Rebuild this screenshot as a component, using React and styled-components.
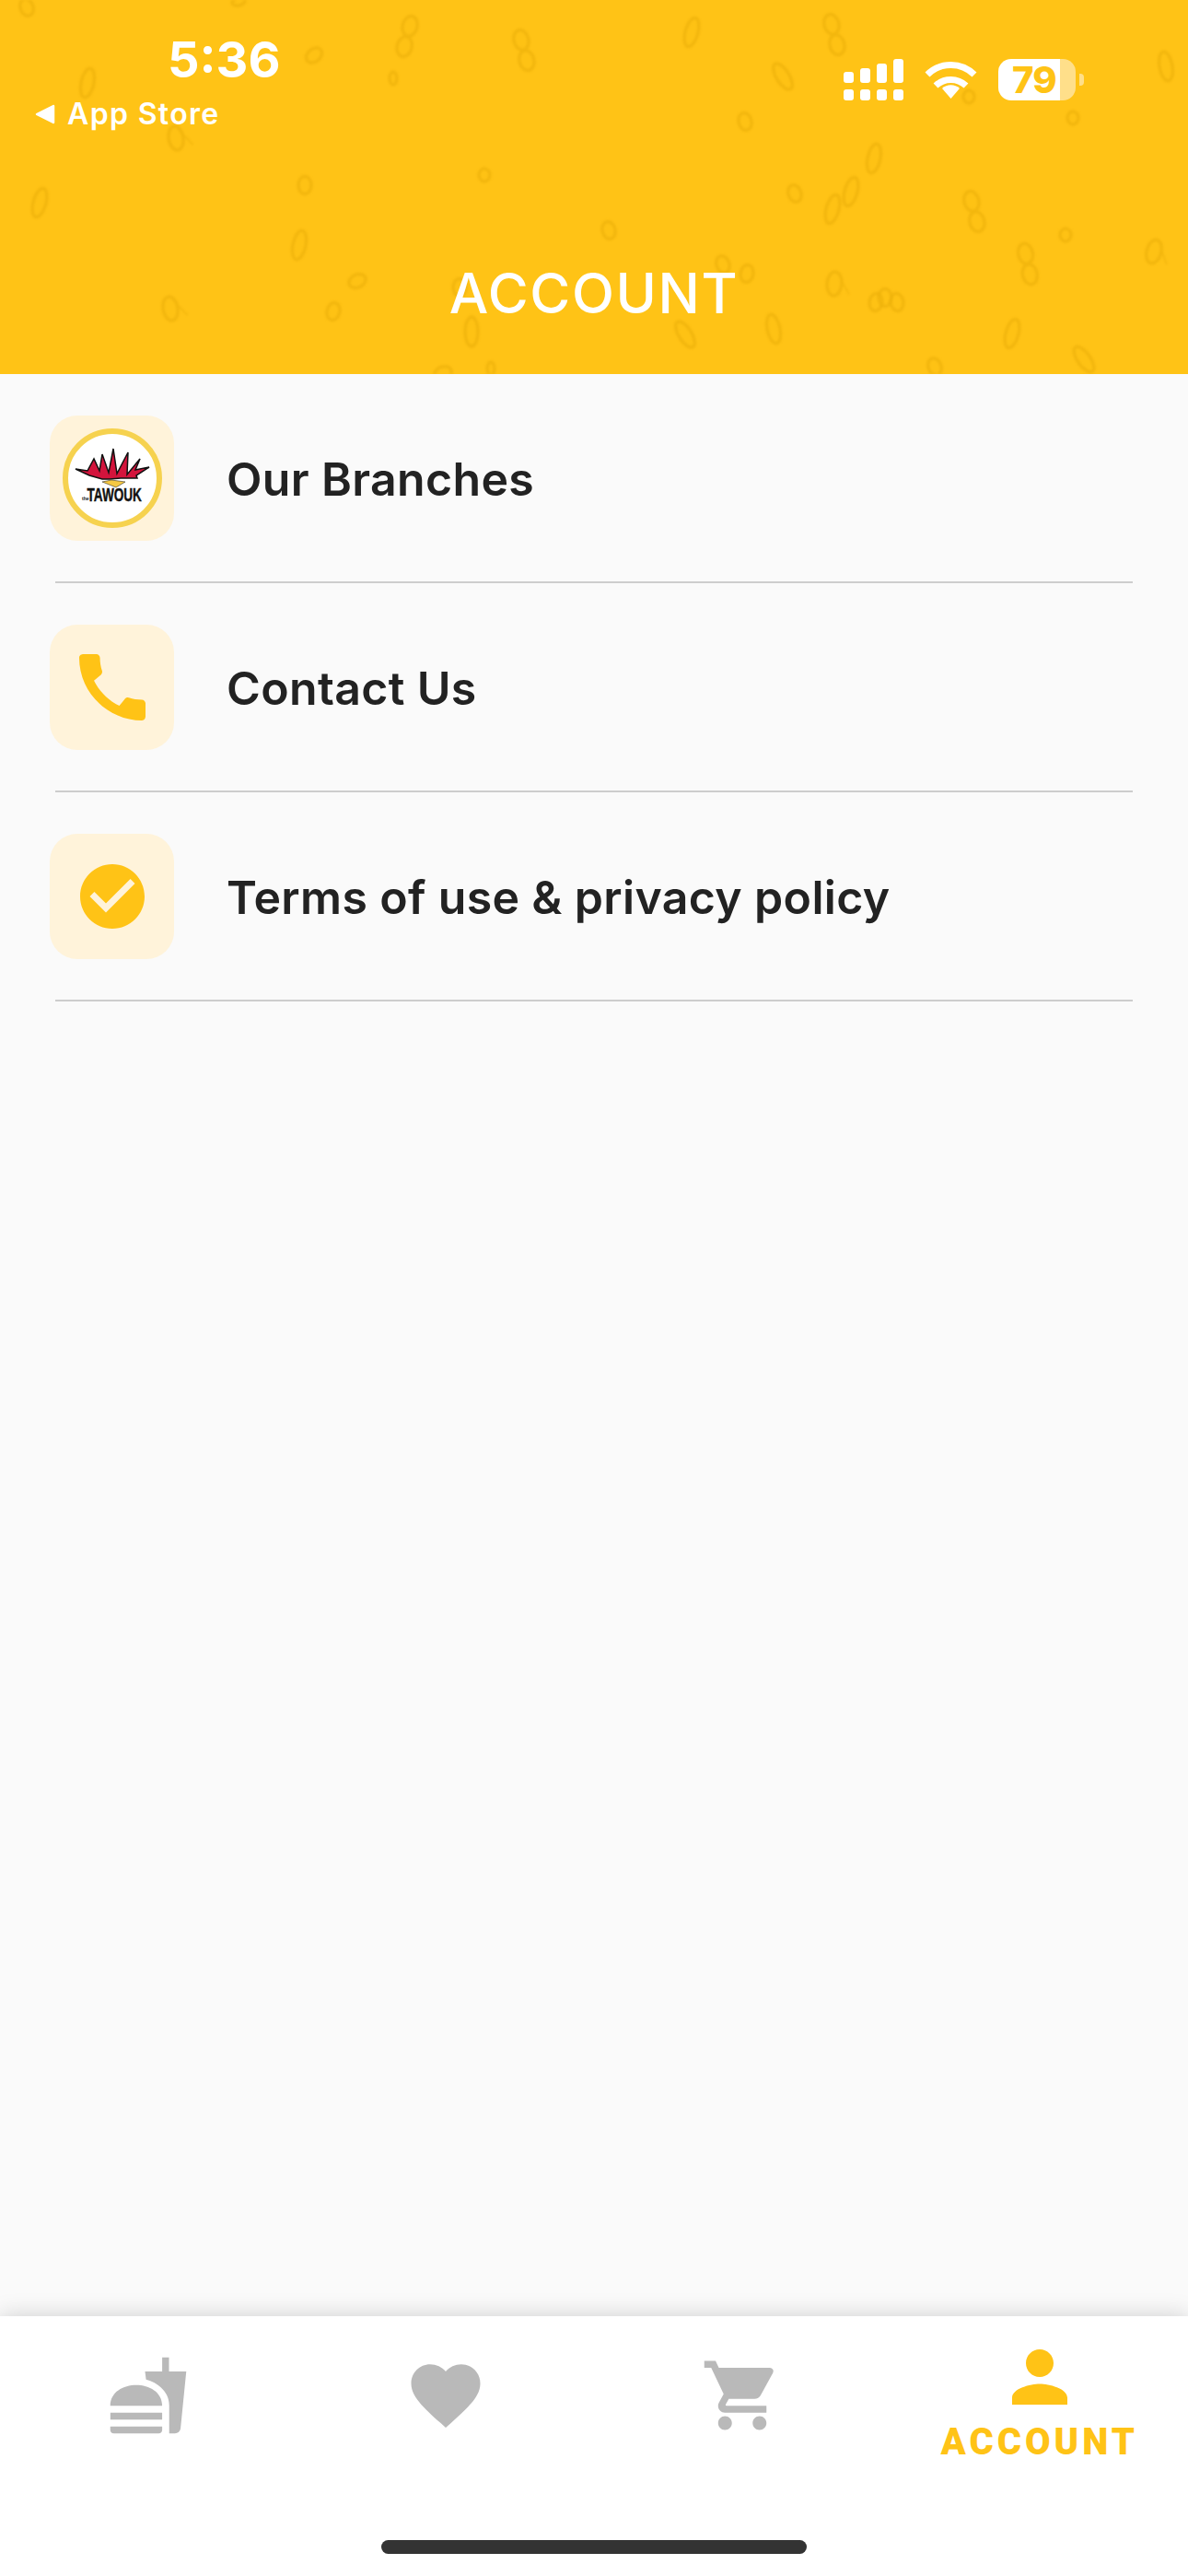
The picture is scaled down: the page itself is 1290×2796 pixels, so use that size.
import React from "react";
import styled, { createGlobalStyle } from "styled-components";
import { MdCall, MdCheckCircle, MdFastfood, MdFavorite, MdShoppingCart, MdPerson } from "react-icons/md";

const Global = createGlobalStyle`
  html, body { margin: 0; padding: 0; background: #fafafa; }
  * { box-sizing: border-box; }
`;

const YELLOW = "#ffc316";

const Page = styled.div`
  width: 1290px;
  height: 2796px;
  display: flex;
  flex-direction: column;
  overflow: hidden;
  background: #fafafa;
  font-family: Inter, "Liberation Sans", sans-serif;
`;

const Header = styled.header`
  position: relative;
  height: 406px;
  flex: none;
  background: ${YELLOW};
  color: #fff;
  display: flex;
  flex-direction: column;
  overflow: hidden;
`;

const Texture = styled.svg`
  position: absolute;
  inset: 0;
  filter: blur(1px);
`;

const StatusBar = styled.div`
  position: relative;
  display: flex;
  justify-content: space-between;
  padding: 36px 113px 0 38px;
  height: 282px;
`;

const StatusLeft = styled.div`
  display: flex;
  flex-direction: column;
`;

const Time = styled.div`
  font-size: 54px;
  line-height: 58px;
  font-weight: 700;
  margin-left: 144px;
`;

const BackLink = styled.div`
  display: flex;
  align-items: center;
  gap: 13px;
  margin-top: 10px;
  font-size: 32px;
  line-height: 40px;
  font-weight: 600;
  letter-spacing: 1.35px;
`;

const StatusRight = styled.div`
  display: flex;
  align-items: flex-start;
  gap: 23px;
  padding-top: 28px;
`;

const BatteryWrap = styled.div`
  display: flex;
  align-items: center;
  gap: 4px;
`;

const BatteryBody = styled.div`
  width: 84px;
  height: 45px;
  border-radius: 14px;
  background: linear-gradient(to right, #fff 0, #fff 67px, #ffdf8a 67px);
  color: ${YELLOW};
  font-size: 40px;
  line-height: 45px;
  font-weight: 800;
  padding-left: 15px;
  letter-spacing: -1px;
`;

const BatteryCap = styled.div`
  width: 5px;
  height: 13px;
  border-radius: 0 4px 4px 0;
  background: #ffdf8a;
`;

const Title = styled.h1`
  position: relative;
  margin: 0;
  text-align: center;
  font-size: 60px;
  line-height: 72px;
  font-weight: 500;
  letter-spacing: 1.6px;
`;

const Main = styled.main`
  flex: 1;
  display: flex;
  flex-direction: column;
`;

const Row = styled.div`
  height: 227px;
  padding: 45px 60px 0 54px;
  display: flex;
  flex-direction: column;
`;

const RowBody = styled.div`
  display: flex;
  align-items: center;
  gap: 57px;
  height: 136px;
`;

const IconBox = styled.div`
  width: 135px;
  height: 136px;
  border-radius: 30px;
  background: #fff3da;
  color: ${YELLOW};
  display: flex;
  align-items: center;
  justify-content: center;
`;

const RowLabel = styled.div`
  padding-top: 1px;
  font-size: 50px;
  line-height: 60px;
  font-weight: 600;
  color: #222;
  letter-spacing: 0.35px;
  white-space: nowrap;
`;

const Divider = styled.div`
  height: 2px;
  margin: 44px 0 0 6px;
  background: #cdcdcd;
`;

const TabBar = styled.nav`
  flex: none;
  height: 282px;
  background: #fff;
  box-shadow: 0 0 24px rgba(0, 0, 0, 0.18);
  display: flex;
  flex-direction: column;
  position: relative;
`;

const Tabs = styled.div`
  flex: 1;
  display: grid;
  grid-template-columns: repeat(4, 1fr);
`;

const Tab = styled.div`
  display: flex;
  flex-direction: column;
  align-items: center;
  padding-top: ${(p) => (p.$active ? "21px" : "41px")};
  color: ${(p) => (p.$active ? YELLOW : "#b9b9b9")};
`;

const TabLabel = styled.div`
  margin-top: 4px;
  font-family: Roboto, "Liberation Sans", sans-serif;
  font-size: 40px;
  line-height: 44px;
  font-weight: 900;
  letter-spacing: 4px;
  white-space: nowrap;
`;

const HomeIndicator = styled.div`
  width: 462px;
  height: 15px;
  border-radius: 8px;
  background: #333;
  margin: 0 auto 24px;
`;

const blobs = [
  [29, 8, "s", -20], [442, 40, "d", 15], [341, 60, "s", 50], [569, 55, "d", -15], [427, 85, "t", 0],
  [95, 90, "l", 12], [191, 150, "d2", -10], [331, 201, "s", 0], [526, 190, "c", 0], [43, 220, "l", 15],
  [325, 266, "l", 12], [388, 305, "s", 65], [185, 335, "d2", -10], [362, 338, "s", 15], [499, 312, "s", 0],
  [512, 360, "l", 0], [481, 405, "s", 70], [533, 400, "t", 0], [259, 2, "t", 80],
  [751, 35, "l", 15], [906, 38, "d", -15], [850, 83, "l", -32], [809, 132, "s", -15], [1165, 128, "c", 0],
  [949, 172, "l", 12], [863, 210, "s", -20], [924, 208, "l", 15], [904, 227, "l", 15], [1058, 230, "d", -15],
  [1266, 72, "l", -10], [1052, 105, "c", 0], [661, 250, "s", -15], [1157, 255, "c", 0], [785, 287, "s", -20],
  [811, 297, "s", 10], [906, 308, "d2", 5], [1116, 287, "d", -12], [1253, 273, "d2", 15], [951, 328, "s", 8],
  [961, 323, "s", 0], [974, 328, "s", -8], [744, 363, "l", -32], [840, 357, "l", -12], [1099, 362, "l", 15],
  [1177, 390, "l", -35], [1015, 398, "s", -20],
];

const Blob = ({ x, y, kind, rot }) => (
  <g
    transform={`translate(${x} ${y}) rotate(${rot})`}
    fill="#f4b80f"
    fillOpacity="0.2"
    stroke="#eeb20c"
    strokeWidth="3.5"
    opacity="0.7"
  >
    {kind === "l" && <ellipse rx="7" ry="16" />}
    {kind === "s" && <ellipse rx="7" ry="9.5" />}
    {kind === "t" && <ellipse rx="4" ry="7" />}
    {kind === "c" && <ellipse rx="6" ry="7" />}
    {kind === "d" && (
      <>
        <ellipse cy="-12" rx="8" ry="11" />
        <ellipse cy="11" rx="8" ry="11" />
      </>
    )}
    {kind === "d2" && (
      <>
        <ellipse rx="8" ry="13" />
        <path d="M6 -6 L17 10" strokeWidth="1.5" />
      </>
    )}
  </g>
);

const Triangle = () => (
  <svg width="22" height="22" viewBox="0 0 22 22">
    <path d="M20 2 L2 11 L20 20 Z" fill="#fff" stroke="#fff" strokeWidth="2.5" strokeLinejoin="round" />
  </svg>
);

const Signal = () => (
  <svg width="65" height="45" viewBox="0 0 65 45" fill="#fff">
    {[
      [0, 14],
      [18, 10],
      [36, 5],
      [54, 0],
    ].map(([x, top]) => (
      <g key={x}>
        <rect x={x} y={top} width="11" height={26 - top} rx="3" />
        <rect x={x} y="33" width="11" height="12" rx="3" />
      </g>
    ))}
  </svg>
);

const Wifi = () => (
  <svg width="57" height="41" viewBox="0 0 57 41" style={{ marginTop: 2 }}>
    <path d="M3 15 A36 36 0 0 1 54 15" fill="none" stroke="#fff" strokeWidth="7" />
    <path d="M12 27 A24 24 0 0 1 45 27" fill="none" stroke="#fff" strokeWidth="7" />
    <path d="M28.5 41 L19 30 A14 14 0 0 1 38 30 Z" fill="#fff" />
  </svg>
);

const Logo = () => (
  <svg width="108" height="108" viewBox="0 0 108 108">
    <circle cx="54" cy="54" r="51" fill="#fff" stroke="#f6d24f" strokeWidth="6" />
    <path
      d="M14 44 L27 46 L34 33 L40 46 L43 28 L50 48 L55 22 L59 49 L71 26 L70 50 L84 33 L79 45 L94 42 L80 51 L81 54 L63 54 L51 55 L43 55 L29 51 Z"
      fill="#d3143c"
      stroke="#111"
      strokeWidth="1.5"
      strokeLinejoin="miter"
    />
    <path d="M43 58 L53 56 L68 58 L58 64 Z" fill="#f5c842" stroke="#111" strokeWidth="0.5" />
    <text x="21" y="78" fontFamily="Liberation Sans, sans-serif" fontSize="5" fontWeight="700" fill="#111">
      the
    </text>
    <g transform="scale(0.68 1)">
      <text
        x="39"
        y="79"
        fontFamily="Liberation Sans, sans-serif"
        fontSize="20"
        fontWeight="700"
        fill="#111"
        stroke="#111"
        strokeWidth="0.4"
      >
        TAWOUK
      </text>
    </g>
  </svg>
);

const rows = [
  { label: "Our Branches", icon: <Logo /> },
  { label: "Contact Us", icon: <MdCall size={96} /> },
  { label: "Terms of use & privacy policy", icon: <MdCheckCircle size={84} /> },
];

export default function App() {
  return (
    <Page>
      <Global />
      <Header>
        <Texture width="1290" height="406" viewBox="0 0 1290 406" aria-hidden="true">
          {blobs.map(([x, y, kind, rot], i) => (
            <Blob key={i} x={x} y={y} kind={kind} rot={rot} />
          ))}
        </Texture>
        <StatusBar>
          <StatusLeft>
            <Time>5:36</Time>
            <BackLink>
              <Triangle />
              App Store
            </BackLink>
          </StatusLeft>
          <StatusRight>
            <Signal />
            <Wifi />
            <BatteryWrap>
              <BatteryBody>79</BatteryBody>
              <BatteryCap />
            </BatteryWrap>
          </StatusRight>
        </StatusBar>
        <Title>ACCOUNT</Title>
      </Header>
      <Main>
        {rows.map((r) => (
          <Row key={r.label}>
            <RowBody>
              <IconBox>{r.icon}</IconBox>
              <RowLabel>{r.label}</RowLabel>
            </RowBody>
            <Divider />
          </Row>
        ))}
      </Main>
      <TabBar>
        <Tabs>
          <Tab>
            <MdFastfood size={90} />
          </Tab>
          <Tab>
            <MdFavorite size={90} />
          </Tab>
          <Tab>
            <MdShoppingCart size={90} />
          </Tab>
          <Tab $active>
            <MdPerson size={90} />
            <TabLabel>ACCOUNT</TabLabel>
          </Tab>
        </Tabs>
        <HomeIndicator />
      </TabBar>
    </Page>
  );
}
